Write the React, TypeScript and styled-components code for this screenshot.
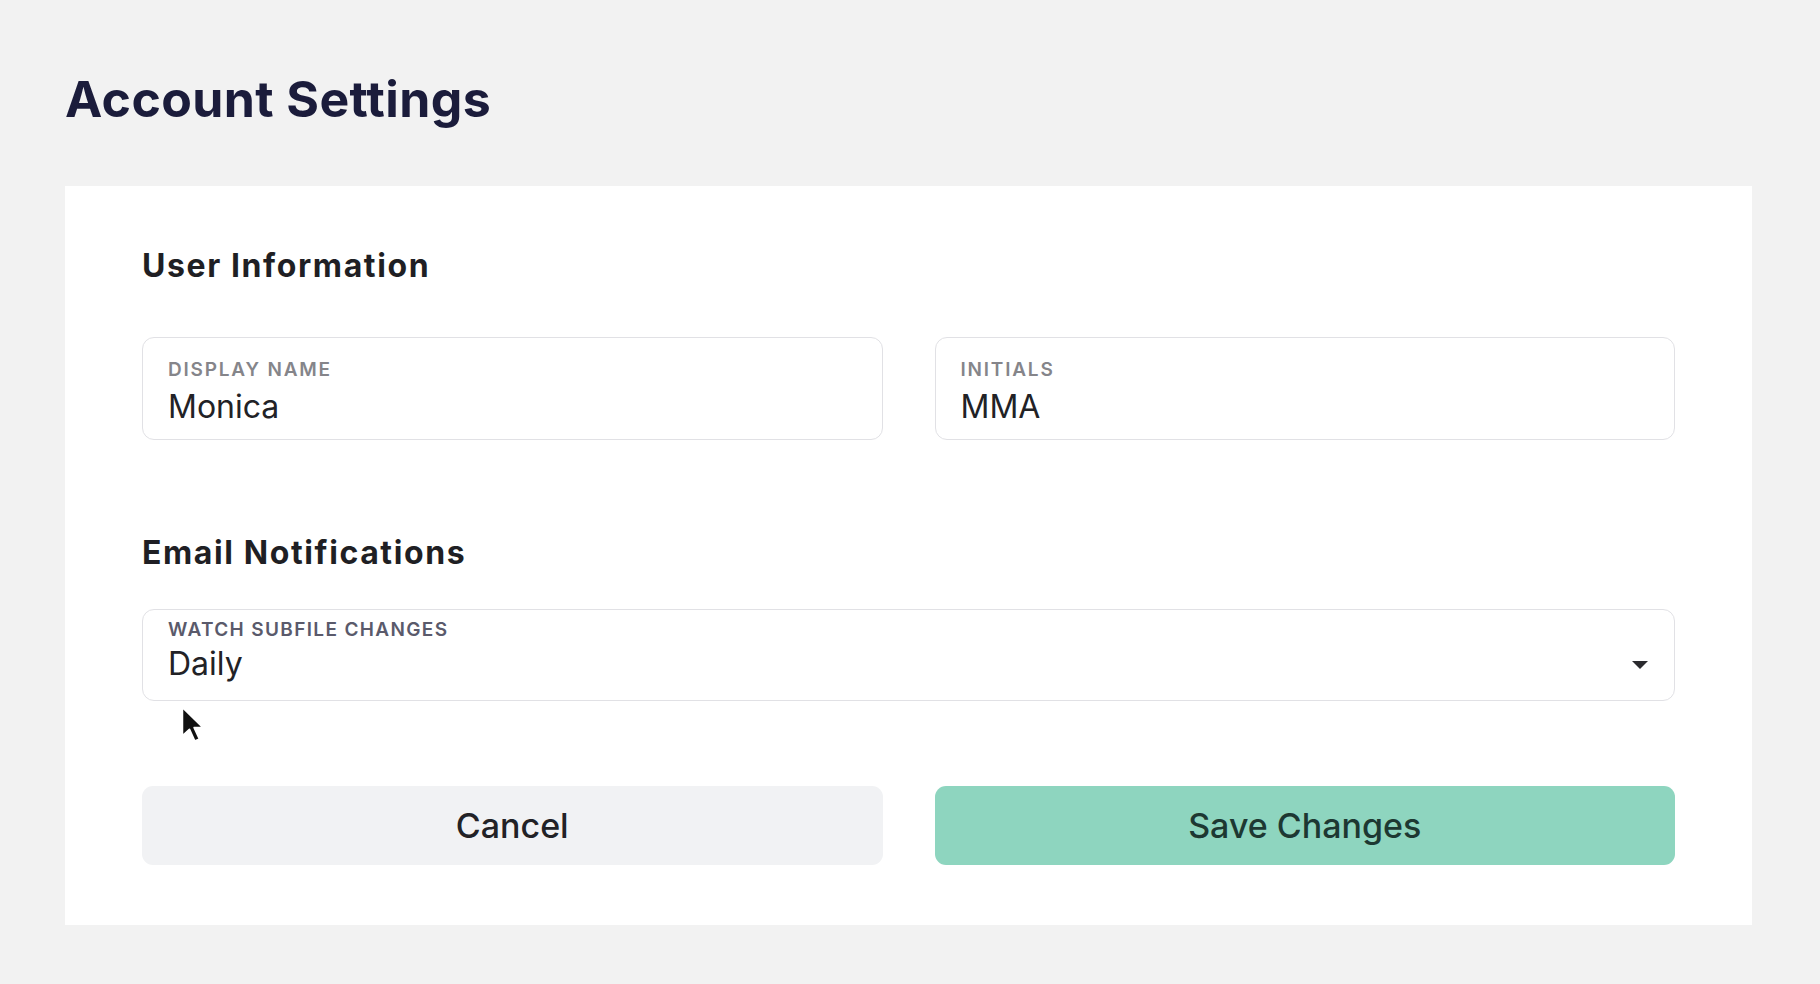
import React from "react";
import styled, { createGlobalStyle, css } from "styled-components";

const GlobalStyle = createGlobalStyle`
  html, body {
    margin: 0;
    padding: 0;
    background: #f2f2f2;
  }
  body {
    font-family: Inter, "Noto Sans", "Liberation Sans", sans-serif;
    color: #1f1f24;
  }
  * { box-sizing: border-box; }
`;

const Page = styled.main`
  position: relative;
  width: 1820px;
  min-height: 984px;
  padding: 69px 68px 59px 65px;
`;

const Title = styled.h1`
  margin: 0;
  font-size: 50px;
  line-height: 60px;
  font-weight: 700;
  color: #1b1c3b;
  letter-spacing: 0.4px;
`;

const Card = styled.section`
  margin-top: 57px;
  background: #ffffff;
  padding: 60px 77px 60px 77px;
  display: flex;
  flex-direction: column;
`;

const SectionTitle = styled.h2<{ $gap: number; $top?: number }>`
  margin: ${(p) => p.$top ?? 0}px 0 ${(p) => p.$gap}px 0;
  font-size: 32px;
  line-height: 40px;
  font-weight: 700;
  letter-spacing: 1.6px;
  color: #1f1f24;
`;

const FieldRow = styled.div`
  display: grid;
  grid-template-columns: 1fr 1fr;
  column-gap: 52px;
`;

const Field = styled.div<{ $compact?: boolean }>`
  border: 1.5px solid #e1e1e5;
  border-radius: 12px;
  background: #fff;
  padding: 0 26px 0 25px;
  display: flex;
  flex-direction: column;
  ${(p) =>
    p.$compact
      ? css`
          height: 92px;
          padding-top: 8px;
          gap: 2px;
        `
      : css`
          height: 103px;
          padding-top: 20px;
          gap: 5px;
        `}
`;

const FieldLabel = styled.span<{ $dark?: boolean }>`
  font-size: 19px;
  line-height: 24px;
  font-weight: 600;
  letter-spacing: ${(p) => (p.$dark ? "1.35px" : "1.8px")};
  text-transform: uppercase;
  color: ${(p) => (p.$dark ? "#5a5a6b" : "#85858a")};
`;

const ValueRow = styled.div`
  display: flex;
  align-items: center;
  justify-content: space-between;
  height: 40px;
`;

const FieldValue = styled.span`
  font-size: 32px;
  line-height: 40px;
  font-weight: 400;
  color: #222226;
`;

const Caret = styled.svg`
  width: 16px;
  height: 8px;
  flex: none;
  margin-top: 2px;
`;

const Actions = styled.div`
  margin-top: 85px;
  display: grid;
  grid-template-columns: 1fr 1fr;
  column-gap: 52px;
`;

const Button = styled.button<{ $primary?: boolean }>`
  height: 79px;
  border: none;
  border-radius: 11px;
  font-family: Inter, "Noto Sans", sans-serif;
  font-size: 34px;
  font-weight: 500;
  cursor: pointer;
  background: ${(p) => (p.$primary ? "#8ed5bf" : "#f1f2f4")};
  color: ${(p) => (p.$primary ? "#1d3832" : "#222226")};
`;

const Pointer = styled.svg`
  position: absolute;
  left: 180px;
  top: 705px;
  width: 26px;
  height: 38px;
  pointer-events: none;
`;

export default function App() {
  return (
    <>
      <GlobalStyle />
      <Page>
        <Title>Account Settings</Title>
        <Card>
          <SectionTitle $gap={51}>User Information</SectionTitle>
          <FieldRow>
            <Field>
              <FieldLabel>Display Name</FieldLabel>
              <FieldValue>Monica</FieldValue>
            </Field>
            <Field>
              <FieldLabel>Initials</FieldLabel>
              <FieldValue>MMA</FieldValue>
            </Field>
          </FieldRow>

          <SectionTitle $top={93} $gap={36}>
            Email Notifications
          </SectionTitle>
          <Field $compact>
            <FieldLabel $dark>Watch Subfile Changes</FieldLabel>
            <ValueRow>
              <FieldValue>Daily</FieldValue>
              <Caret viewBox="0 0 16 8">
                <path d="M0 0 L16 0 L8 8 Z" fill="#2a2a2e" />
              </Caret>
            </ValueRow>
          </Field>

          <Actions>
            <Button>Cancel</Button>
            <Button $primary>Save Changes</Button>
          </Actions>
        </Card>
        <Pointer viewBox="0 0 22 32">
          <path
            d="M2 2 L2 26 L8 20.5 L12.5 30.5 L16.5 28.7 L12 19 L19.5 19 Z"
            fill="#111"
            stroke="#fff"
            strokeWidth="1.5"
            strokeLinejoin="round"
          />
        </Pointer>
      </Page>
    </>
  );
}
